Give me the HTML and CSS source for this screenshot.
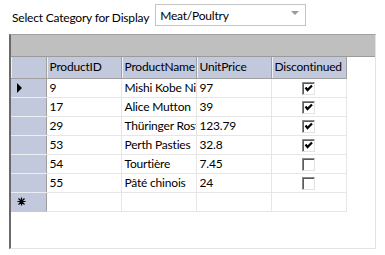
FILE: index.html
```html
<!DOCTYPE html>
<html lang="en">
<head>
    <meta charset="UTF-8">
    <title>Products by Category</title>
    <link rel="stylesheet" href="styles.css">
</head>
<body>
    <div class="toolbar">
        <label class="toolbar-label">Select Category for Display</label>
        <div class="combo">
            <span class="combo-text">Meat/Poultry</span>
            <span class="combo-arrow"></span>
        </div>
    </div>

    <div class="grid-box">
        <div class="grid-band"></div>
        <table class="grid">
            <colgroup>
                <col class="col-rowhead">
                <col class="col-data">
                <col class="col-data">
                <col class="col-data">
                <col class="col-data">
            </colgroup>
            <thead>
                <tr>
                    <th class="corner"></th>
                    <th>ProductID</th>
                    <th>ProductName</th>
                    <th>UnitPrice</th>
                    <th>Discontinued</th>
                </tr>
            </thead>
            <tbody>
                <tr>
                    <td class="rowhead"><span class="current-row"></span></td>
                    <td>9</td><td>Mishi Kobe Niku</td><td>97</td>
                    <td class="check-cell"><span class="check on"></span></td>
                </tr>
                <tr>
                    <td class="rowhead"></td>
                    <td>17</td><td>Alice Mutton</td><td>39</td>
                    <td class="check-cell"><span class="check on"></span></td>
                </tr>
                <tr>
                    <td class="rowhead"></td>
                    <td>29</td><td>Thüringer Rostbratwurst</td><td>123.79</td>
                    <td class="check-cell"><span class="check on"></span></td>
                </tr>
                <tr>
                    <td class="rowhead"></td>
                    <td>53</td><td>Perth Pasties</td><td>32.8</td>
                    <td class="check-cell"><span class="check on"></span></td>
                </tr>
                <tr>
                    <td class="rowhead"></td>
                    <td>54</td><td>Tourtière</td><td>7.45</td>
                    <td class="check-cell"><span class="check"></span></td>
                </tr>
                <tr>
                    <td class="rowhead"></td>
                    <td>55</td><td>Pâté chinois</td><td>24</td>
                    <td class="check-cell"><span class="check"></span></td>
                </tr>
                <tr class="new-row">
                    <td class="rowhead">
                        <svg class="new-mark" width="9" height="9" viewBox="0 0 9 9">
                            <path d="M4.5 0.5V8.5M0.5 4.5H8.5M1.5 1.5L7.5 7.5M7.5 1.5L1.5 7.5" stroke="#000" stroke-width="1.2" fill="none"/>
                        </svg>
                    </td>
                    <td></td><td></td><td></td><td></td>
                </tr>
            </tbody>
        </table>
    </div>
</body>
</html>
```

FILE: styles.css
```css
:root {
    --head-bg: #c3c9dd;
    --head-line: #a0a0a0;
    --cell-line: #e6e6e6;
    --text: #000000;
}

* {
    margin: 0;
    padding: 0;
    box-sizing: border-box;
}

body {
    width: 385px;
    height: 255px;
    background: #ffffff;
    color: var(--text);
    font-family: Lato, "Noto Sans", sans-serif;
    font-size: 12px;
    letter-spacing: -0.2px;
    overflow: hidden;
}

/* top bar */
.toolbar {
    display: flex;
    align-items: center;
    gap: 6px;
    padding: 4px 0 0 12px;
    height: 26px;
}

.toolbar-label {
    padding-top: 5px;
}

.combo {
    display: flex;
    align-items: center;
    justify-content: space-between;
    width: 151px;
    height: 22px;
    border: 1px solid #c4c4c4;
    background: #ffffff;
    padding: 0 6px 0 4px;
}

.combo-arrow {
    width: 0;
    height: 0;
    border-left: 4px solid transparent;
    border-right: 4px solid transparent;
    border-top: 4px solid #9a9a9a;
    margin-top: -4px;
}

/* grid */
.grid-box {
    margin: 8px 0 0 9px;
    width: 367px;
    height: 215px;
    border-top: 1px solid #a0a0a0;
    border-left: 2px solid #6a6a6a;
    border-right: 1px solid #e3e3e3;
    border-bottom: 1px solid #e3e3e3;
    background: #ffffff;
}

.grid-band {
    height: 22px;
    background: #bfbfbf;
    border-bottom: 1px solid #9a9a9a;
}

.grid {
    border-collapse: collapse;
    table-layout: fixed;
    width: 335px;
}

.col-rowhead { width: 35px; }
.col-data { width: 75px; }

.grid th,
.grid td {
    height: 19px;
    padding: 0 3px;
    white-space: nowrap;
    overflow: hidden;
    text-align: left;
    font-weight: normal;
    line-height: 18px;
}

.grid th {
    height: 21px;
    background: var(--head-bg);
    border-right: 1px solid var(--head-line);
    border-bottom: 1px solid var(--head-line);
    box-shadow: inset 1px 0 #eef0f6;
}

.grid td {
    border-right: 1px solid var(--cell-line);
    border-bottom: 1px solid var(--cell-line);
}

.grid td.rowhead {
    background: var(--head-bg);
    border-right: 1px solid var(--head-line);
    border-bottom: 1px solid #eceef4;
    padding-left: 5px;
}

.new-row td.rowhead {
    border-bottom-color: var(--head-bg);
}

.new-mark {
    display: block;
    margin-left: 1px;
}

.current-row {
    display: block;
    width: 0;
    height: 0;
    margin-left: 1px;
    border-top: 5px solid transparent;
    border-bottom: 5px solid transparent;
    border-left: 5px solid #000000;
}

.check-cell {
    text-align: center !important;
}

.check {
    display: inline-block;
    width: 13px;
    height: 13px;
    margin-top: 3px;
    vertical-align: top;
    border: 1px solid;
    border-color: #8a8a8a #e3e3e3 #e3e3e3 #8a8a8a;
    box-shadow: inset 1px 1px #5a5a5a;
    background: #ffffff;
}

.check.on {
    background: #ffffff url("data:image/svg+xml,%3Csvg xmlns='http://www.w3.org/2000/svg' width='11' height='11'%3E%3Cpath d='M2.5 4.5 L4.5 7 L9 2.5' fill='none' stroke='black' stroke-width='2.2'/%3E%3C/svg%3E") no-repeat 0 0;
}
```
